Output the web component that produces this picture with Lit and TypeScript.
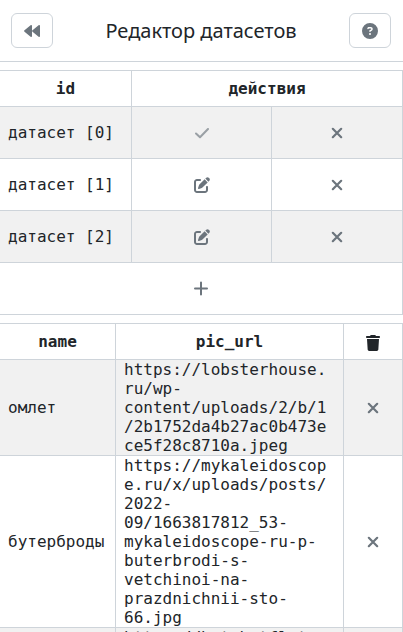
import { LitElement, html, svg, css } from "lit";
import { customElement, property, state } from "lit/decorators.js";

const ICONS = {
  rewind: { box: "0 0 16 16", shape: svg`<path d="M8 2.800v10.400c0 .8-.8 1.100-1.400.6L.5 8.700a.9.900 0 0 1 0-1.400l6.100-5.100c.6-.5 1.400-.2 1.400.6zM16 2.800v10.400c0 .8-.8 1.100-1.400.6L8.500 8.700a.9.900 0 0 1 0-1.400l6.100-5.100c.6-.5 1.400-.2 1.400.6z"/>` },
  help: { box: "0 0 512 512", shape: svg`<path d="M256 512A256 256 0 1 0 256 0a256 256 0 1 0 0 512zM169.800 165.300c7.900-22.300 29.100-37.300 52.800-37.300h58.300c34.900 0 63.100 28.300 63.100 63.100c0 22.600-12.100 43.500-31.700 54.800L280 264.400c-.2 13-10.900 23.600-24 23.600c-13.300 0-24-10.700-24-24V250.500c0-8.600 4.600-16.500 12.100-20.800l44.300-25.400c4.700-2.700 7.600-7.700 7.600-13.100c0-8.400-6.800-15.100-15.100-15.100H222.600c-3.400 0-6.400 2.100-7.500 5.300l-.4 1.200c-4.400 12.500-18.200 19-30.600 14.600s-19-18.200-14.600-30.600l.4-1.200zM224 352a32 32 0 1 1 64 0 32 32 0 1 1-64 0z"/>` },
  check: { box: "0 0 16 16", shape: svg`<path d="M2 8.500 6 12.300 14 4" fill="none" stroke="currentColor" stroke-width="2" stroke-linecap="round" stroke-linejoin="round"/>` },
  cross: { box: "0 0 16 16", shape: svg`<path d="M3.800 3.800 12.200 12.200M12.200 3.800 3.800 12.200" fill="none" stroke="currentColor" stroke-width="2.200" stroke-linecap="round"/>` },
  plus: { box: "0 0 16 16", shape: svg`<path d="M8 1.500V13.500M2 7.500H14" fill="none" stroke="currentColor" stroke-width="2" stroke-linecap="round"/>` },
  edit: { box: "0 0 512 512", shape: svg`<path d="M471.600 21.700c-21.900-21.900-57.300-21.900-79.200 0L362.300 51.700l97.900 97.900 30.100-30.100c21.900-21.900 21.900-57.300 0-79.200L471.600 21.700zm-299.200 220c-6.100 6.100-10.800 13.600-13.500 21.900l-29.600 88.800c-2.900 8.600-.6 18.100 5.800 24.600s15.900 8.700 24.600 5.800l88.800-29.600c8.200-2.700 15.700-7.400 21.900-13.500L437.700 172.300 339.700 74.300 172.400 241.700zM96 64C43 64 0 107 0 160V416c0 53 43 96 96 96H352c53 0 96-43 96-96V320c0-17.700-14.300-32-32-32s-32 14.300-32 32v96c0 17.700-14.300 32-32 32H96c-17.700 0-32-14.300-32-32V160c0-17.700 14.300-32 32-32h96c17.700 0 32-14.300 32-32s-14.300-32-32-32H96z"/>` },
  trash: { box: "0 0 448 512", shape: svg`<path d="M135.200 17.700C140.600 6.800 151.700 0 163.800 0H284.200c12.100 0 23.200 6.800 28.600 17.700L320 32h96c17.700 0 32 14.300 32 32s-14.300 32-32 32H32C14.300 96 0 81.700 0 64S14.300 32 32 32h96l7.200-14.300zM32 128H416L394.800 467c-1.600 25.300-22.600 45-47.900 45H101.100c-25.300 0-46.300-19.700-47.900-45L32 128z"/>` },
};

@customElement("ui-icon")
class UiIcon extends LitElement {
  @property() name: keyof typeof ICONS = "cross";

  static styles = css`
    :host { display: inline-flex; vertical-align: middle; }
    .glyph { display: block; width: 16px; height: 16px; fill: currentColor; }
  `;

  render() {
    const icon = ICONS[this.name];
    return html`<svg class="glyph" viewBox=${icon.box} aria-hidden="true">${icon.shape}</svg>`;
  }
}

@customElement("app-root")
class AppRoot extends LitElement {
  @state() private selected = 0;
  @state() private datasets = ["датасет [0]", "датасет [1]", "датасет [2]"];
  @state() private rows = [
    { name: "омлет", url: "https://lobsterhouse.ru/wp-content/uploads/2/b/1/2b1752da4b27ac0b473ece5f28c8710a.jpeg" },
    { name: "бутерброды", url: "https://mykaleidoscope.ru/x/uploads/posts/2022-09/1663817812_53-mykaleidoscope-ru-p-buterbrodi-s-vetchinoi-na-prazdnichnii-sto-66.jpg" },
    { name: "хотдоги", url: "https://hotshotflat.ru/wp-content/uploads/2022/09/hotdog-classic-1663817812.jpeg" },
  ];

  static styles = css`
    :host {
      --line: #ced4da;
      --ink: #212529;
      --muted: #6c757d;
      display: flex;
      flex-direction: column;
      height: 100vh;
      background: #fff;
      color: var(--ink);
      font: 16px/19px "DejaVu Sans Mono", monospace;
    }
    *, *::before { box-sizing: border-box; }
    .bar {
      display: flex;
      align-items: center;
      justify-content: space-between;
      flex: none;
      padding: 13px 12px 13px 11px;
      border-bottom: 1px solid var(--line);
    }
    .title {
      margin: 0;
      font: 400 20px/24px "Noto Sans", sans-serif;
    }
    button {
      display: inline-flex;
      align-items: center;
      justify-content: center;
      padding: 0;
      border: 0;
      background: none;
      color: var(--muted);
      cursor: pointer;
    }
    .square {
      width: 42px;
      height: 35px;
      border: 1px solid var(--line);
      border-radius: 6px;
    }
    .content {
      display: flex;
      flex-direction: column;
      gap: 8px;
      flex: 1;
      min-height: 0;
      padding-top: 8px;
      overflow-y: auto;
      scrollbar-width: none;
    }
    table {
      width: 100%;
      flex: none;
      table-layout: fixed;
      border-collapse: separate;
      border-spacing: 0;
      border-top: 1px solid var(--line);
    }
    th, td {
      padding: 0 8px;
      border-right: 1px solid var(--line);
      border-bottom: 1px solid var(--line);
      overflow-wrap: anywhere;
      text-align: left;
      vertical-align: middle;
    }
    th { height: 36px; font-weight: 700; text-align: center; }
    td { height: 52px; }
    .striped tr:nth-child(odd) td { background: #f1f1f1; }
    .action { padding: 0; text-align: center; }
    .action button { width: 100%; height: 40px; vertical-align: middle; }
    .action button:disabled { opacity: 0.65; cursor: default; }
    .id { width: 132px; }
    .edit { width: 140px; }
    .name { width: 116px; }
    .remove { width: 59px; }
  `;

  render() {
    return html`
      <header class="bar">
        <button class="square" aria-label="Назад"><ui-icon name="rewind"></ui-icon></button>
        <h1 class="title">Редактор датасетов</h1>
        <button class="square" aria-label="Помощь"><ui-icon name="help"></ui-icon></button>
      </header>
      <main class="content">
        <table>
          <colgroup><col class="id" /><col class="edit" /><col /></colgroup>
          <thead><tr><th scope="col">id</th><th scope="colgroup" colspan="2">действия</th></tr></thead>
          <tbody class="striped">
            ${this.datasets.map((label, i) => html`<tr>
              <td>${label}</td>
              <td class="action">
                <button aria-label="Выбрать" ?disabled=${i === this.selected} @click=${() => (this.selected = i)}>
                  <ui-icon name=${i === this.selected ? "check" : "edit"}></ui-icon>
                </button>
              </td>
              <td class="action"><button aria-label="Удалить"><ui-icon name="cross"></ui-icon></button></td>
            </tr>`)}
          </tbody>
          <tfoot><tr><td class="action" colspan="3"><button aria-label="Добавить"><ui-icon name="plus"></ui-icon></button></td></tr></tfoot>
        </table>
        <table>
          <colgroup><col class="name" /><col /><col class="remove" /></colgroup>
          <thead><tr>
            <th scope="col">name</th>
            <th scope="col">pic_url</th>
            <th scope="col" class="action" aria-label="Удалить"><ui-icon name="trash"></ui-icon></th>
          </tr></thead>
          <tbody class="striped">
            ${this.rows.map((row) => html`<tr>
              <td>${row.name}</td>
              <td>${row.url}</td>
              <td class="action"><button aria-label="Удалить"><ui-icon name="cross"></ui-icon></button></td>
            </tr>`)}
          </tbody>
        </table>
      </main>
    `;
  }
}
